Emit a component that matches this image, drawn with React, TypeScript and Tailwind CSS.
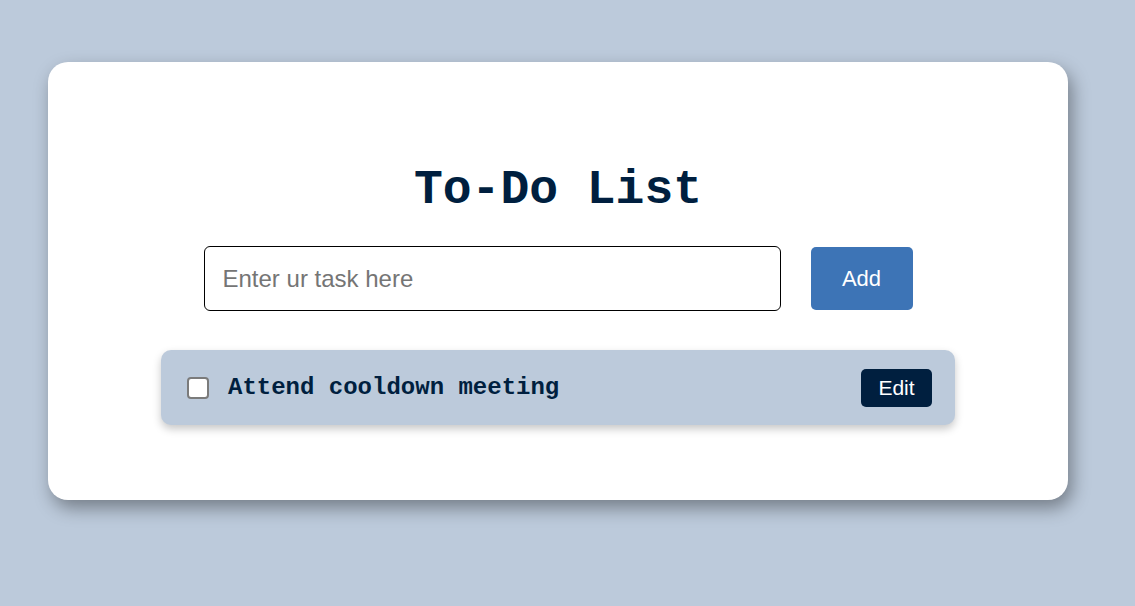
import { useState } from 'react'

type Task = {
  id: number
  text: string
  done: boolean
}

const App = () => {
  const [input, setInput] = useState<string>('')
  const [tasks, setTasks] = useState<Task[]>([
    { id: 1, text: 'Attend cooldown meeting', done: false },
  ])

  const handleAdd = () => {
    const text = input.trim()
    if (!text) return
    setTasks((prev) => [...prev, { id: Date.now(), text, done: false }])
    setInput('')
  }

  const handleToggle = (id: number) => {
    setTasks((prev) => prev.map((t) => (t.id === id ? { ...t, done: !t.done } : t)))
  }

  return (
    <div className="min-h-[606px] w-full bg-[#bccadb] pt-[62px] pl-[48px] font-['Liberation_Sans',Arial,sans-serif]">
      <div className="w-[1020px] rounded-[20px] bg-white pt-[100px] pb-[75px] shadow-[4px_8px_18px_rgba(0,0,0,0.38)]">
        <h1 className="text-center font-['Courier_New','Liberation_Mono',monospace] text-[48px] leading-[56px] font-bold text-[#001f3f]">
          To-Do List
        </h1>
        <div className="mt-[28px] flex items-center justify-center gap-[30px]">
          <input
            type="text"
            value={input}
            onChange={(e) => setInput(e.target.value)}
            placeholder="Enter ur task here"
            className="h-[65px] w-[577px] rounded-[6px] border border-black px-[18px] text-[24px] text-black outline-none placeholder:text-[#757575]"
          />
          <button
            type="button"
            onClick={handleAdd}
            className="h-[63px] w-[102px] rounded-[5px] bg-[#3d74b6] text-[22px] text-white"
          >
            Add
          </button>
        </div>
        <div className="mt-[39px] flex flex-col items-center gap-[12px]">
          {tasks.map((task) => (
            <div
              key={task.id}
              className="flex h-[75px] w-[794px] items-center rounded-[10px] bg-[#bccadb] pr-[23px] pl-[26px] shadow-[0_4px_8px_rgba(0,0,0,0.22)]"
            >
              <input
                type="checkbox"
                checked={task.done}
                onChange={() => handleToggle(task.id)}
                className="m-0 h-[22px] w-[22px] appearance-none rounded-[4px] border-2 border-[#7b7b7b] bg-white checked:border-[#3d74b6] checked:bg-[#3d74b6]"
              />
              <span
                className={`ml-[19px] flex-1 font-['Courier_New','Liberation_Mono',monospace] text-[24px] font-bold text-[#001f3f] ${task.done ? 'line-through' : ''}`}
              >
                {task.text}
              </span>
              <button
                type="button"
                className="h-[38px] w-[71px] rounded-[5px] bg-[#001f3f] text-[21px] text-white"
              >
                Edit
              </button>
            </div>
          ))}
        </div>
      </div>
    </div>
  )
}

export default App
